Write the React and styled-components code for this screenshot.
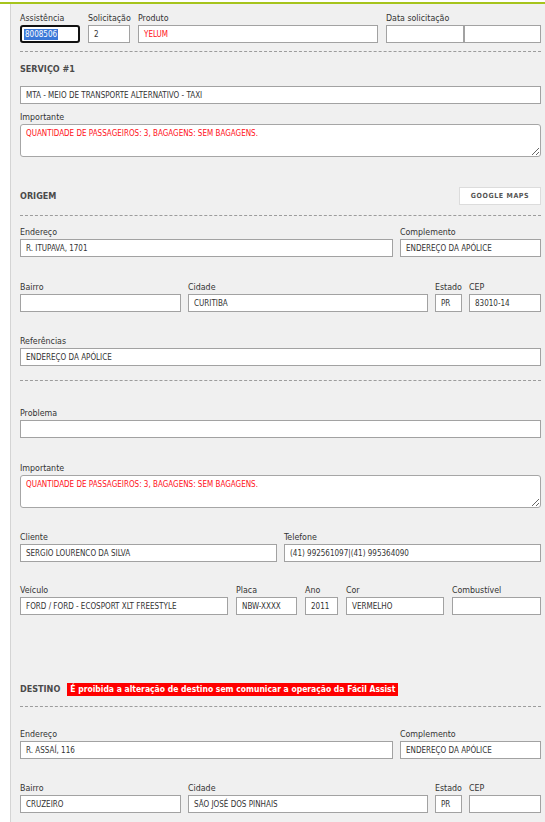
import React from "react";
import styled, { createGlobalStyle, css } from "styled-components";

const FONT = `"DejaVu Sans Condensed", "DejaVu Sans", "Liberation Sans", sans-serif`;

const GlobalStyle = createGlobalStyle`
  html, body { margin: 0; padding: 0; background: #ffffff; }
  body { font-family: ${FONT}; }
  * { box-sizing: border-box; }
`;

const Page = styled.div`
  padding-top: 2px;
  min-height: 822px;
  display: flex;
  flex-direction: column;
`;

const GreenLine = styled.div`
  height: 2px;
  background: #a6c41c;
`;

const Panel = styled.div`
  flex: 1;
  margin-left: 10px;
  border-left: 1px solid #d4d4d4;
  background: #f0f0f0;
  padding: 7px 4px 40px 9px;
`;

const Row = styled.div`
  display: flex;
  align-items: flex-end;
  gap: ${(p) => p.$gap ?? 8}px;
  margin-top: ${(p) => p.$mt ?? 0}px;
`;

const Field = styled.div`
  display: flex;
  flex-direction: column;
  ${(p) => (p.$w ? css`width: ${p.$w}px; flex: none;` : css`flex: 1; min-width: 0;`)}
`;

const Label = styled.div`
  font-size: 8.8px;
  line-height: 14px;
  height: 14px;
  color: #333;
  white-space: nowrap;
`;

const Box = styled.div`
  height: 18px;
  flex: none;
  border: 1px solid #a2a2a2;
  background: #fff;
  font-size: 8px;
  color: ${(p) => (p.$red ? "#ff1020" : "#333")};
  padding: 0 5px;
  display: flex;
  align-items: center;
  white-space: nowrap;
  overflow: hidden;
  ${(p) =>
    p.$focused &&
    css`
      border: 2px solid #111;
      border-radius: 3px;
      padding: 0 2px;
    `}
`;

const Selected = styled.span`
  background: #3b78d8;
  color: #fff;
  line-height: 11px;
  padding: 0 1px;
`;

const Pair = styled.div`
  display: flex;
  & > * {
    flex: 1;
  }
`;

const Area = styled.textarea`
  display: block;
  width: 100%;
  height: 33px;
  margin: 0;
  border: 1px solid #a6a6a6;
  border-radius: 3px;
  background: #fff;
  font-family: ${FONT};
  font-size: 8px;
  line-height: 11px;
  color: #ff1020;
  padding: 3px 5px;
  outline: none;
  resize: both;
`;

const Divider = styled.div`
  border-top: 1px dashed #9c9c9c;
  margin-top: ${(p) => p.$mt ?? 0}px;
`;

const Header = styled.div`
  display: flex;
  align-items: center;
  justify-content: space-between;
  height: 18px;
  margin-top: ${(p) => p.$mt ?? 0}px;
`;

const TitleGroup = styled.div`
  display: flex;
  align-items: center;
  gap: 7px;
`;

const Title = styled.div`
  font-size: 9px;
  font-weight: bold;
  color: #4a4a4a;
`;

const Warning = styled.div`
  background: #ff0000;
  color: #fff;
  font-size: 8.5px;
  font-weight: bold;
  line-height: 13px;
  padding: 0 3px;
`;

const MapsButton = styled.div`
  width: 82px;
  height: 18px;
  background: #fff;
  border: 1px solid #dcdcdc;
  display: flex;
  align-items: center;
  justify-content: center;
  font-size: 7px;
  font-weight: bold;
  letter-spacing: 0.6px;
  color: #555;
`;

function F({ label, w, value, red, children }) {
  return (
    <Field $w={w}>
      {label !== undefined && <Label>{label}</Label>}
      {children || <Box $red={red}>{value}</Box>}
    </Field>
  );
}

export default function App() {
  return (
    <>
      <GlobalStyle />
      <Page>
        <GreenLine />
        <Panel>
          <Row $gap={8}>
            <F label="Assistência" w={60}>
              <Box $focused>
                <Selected>8008506</Selected>
              </Box>
            </F>
            <F label="Solicitação" w={42} value="2" />
            <F label="Produto" w={240} value="YELUM" red />
            <F label="Data solicitação" w={155}>
              <Pair>
                <Box />
                <Box />
              </Pair>
            </F>
          </Row>

          <Divider $mt={8} />
          <Header $mt={8}>
            <Title>SERVIÇO #1</Title>
          </Header>
          <Row $mt={8}>
            <F value="MTA - MEIO DE TRANSPORTE ALTERNATIVO - TAXI" />
          </Row>
          <Row $mt={6}>
            <F label="Importante">
              <Area readOnly defaultValue="QUANTIDADE DE PASSAGEIROS: 3, BAGAGENS: SEM BAGAGENS." />
            </F>
          </Row>

          <Header $mt={30}>
            <Title>ORIGEM</Title>
            <MapsButton>GOOGLE MAPS</MapsButton>
          </Header>
          <Divider $mt={10} />
          <Row $gap={7} $mt={9}>
            <F label="Endereço" w={373} value="R. ITUPAVA, 1701" />
            <F label="Complemento" w={141} value="ENDEREÇO DA APÓLICE" />
          </Row>
          <Row $gap={7} $mt={23}>
            <F label="Bairro" w={161} value="" />
            <F label="Cidade" w={240} value="CURITIBA" />
            <F label="Estado" w={27} value="PR" />
            <F label="CEP" w={72} value="83010-14" />
          </Row>
          <Row $mt={22}>
            <F label="Referências" value="ENDEREÇO DA APÓLICE" />
          </Row>

          <Divider $mt={14} />
          <Row $mt={25}>
            <F label="Problema" value="" />
          </Row>
          <Row $mt={23}>
            <F label="Importante">
              <Area readOnly defaultValue="QUANTIDADE DE PASSAGEIROS: 3, BAGAGENS: SEM BAGAGENS." />
            </F>
          </Row>
          <Row $gap={7} $mt={22}>
            <F label="Cliente" w={257} value="SERGIO LOURENCO DA SILVA" />
            <F label="Telefone" w={257} value="(41) 992561097|(41) 995364090" />
          </Row>
          <Row $gap={8} $mt={21}>
            <F label="Veículo" w={208} value="FORD / FORD - ECOSPORT XLT FREESTYLE" />
            <F label="Placa" w={61} value="NBW-XXXX" />
            <F label="Ano" w={33} value="2011" />
            <F label="Cor" w={98} value="VERMELHO" />
            <F label="Combustível" w={89} value="" />
          </Row>

          <Header $mt={65}>
            <TitleGroup>
              <Title>DESTINO</Title>
              <Warning>É proibida a alteração de destino sem comunicar a operação da Fácil Assist</Warning>
            </TitleGroup>
          </Header>
          <Divider $mt={8} />
          <Row $gap={7} $mt={20}>
            <F label="Endereço" w={373} value="R. ASSAÍ, 116" />
            <F label="Complemento" w={141} value="ENDEREÇO DA APÓLICE" />
          </Row>
          <Row $gap={7} $mt={22}>
            <F label="Bairro" w={161} value="CRUZEIRO" />
            <F label="Cidade" w={240} value="SÃO JOSÉ DOS PINHAIS" />
            <F label="Estado" w={27} value="PR" />
            <F label="CEP" w={72} value="" />
          </Row>
        </Panel>
      </Page>
    </>
  );
}
